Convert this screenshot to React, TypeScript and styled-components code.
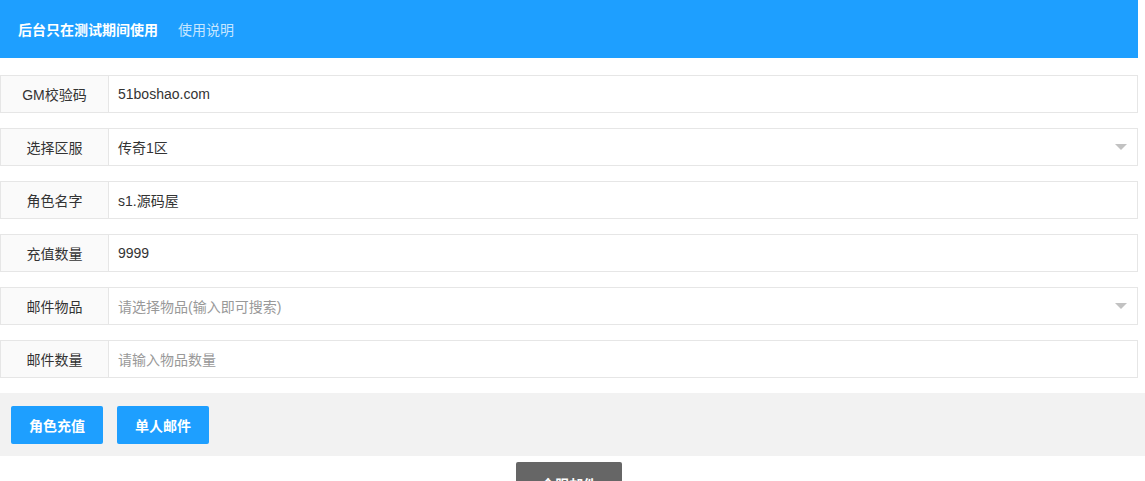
import { FC } from 'react';
import styled, { createGlobalStyle } from 'styled-components';

const GlobalStyle = createGlobalStyle`
  html, body {
    margin: 0;
    padding: 0;
    background: #fff;
    overflow: hidden;
  }
  body {
    font-family: 'Liberation Sans', 'Noto Sans CJK SC', sans-serif;
    font-size: 14px;
    color: #333;
  }
  * {
    box-sizing: border-box;
  }
`;

const Page = styled.div`
  width: 1138px;
`;

const Header = styled.div`
  height: 58px;
  background: #1e9fff;
  display: flex;
  align-items: center;
  padding-left: 18px;
  gap: 20px;
`;

const HeaderTitle = styled.span`
  color: #fff;
  font-weight: 700;
  font-size: 14px;
`;

const HeaderLink = styled.span`
  color: rgba(255, 255, 255, 0.75);
  font-size: 14px;
`;

const Form = styled.div`
  padding-top: 17px;
  display: flex;
  flex-direction: column;
  gap: 15px;
`;

const Row = styled.div`
  display: flex;
  height: 38px;
`;

const Label = styled.div`
  width: 108px;
  flex-shrink: 0;
  display: flex;
  align-items: center;
  justify-content: center;
  background: #fafafa;
  border: 1px solid #e6e6e6;
  border-right: none;
  color: #333;
`;

const Field = styled.div<{ $placeholder?: boolean }>`
  flex: 1;
  position: relative;
  display: flex;
  align-items: center;
  padding-left: 9px;
  border: 1px solid #e6e6e6;
  color: ${p => (p.$placeholder ? '#999' : '#333')};
`;

const Arrow = styled.i`
  position: absolute;
  right: 10px;
  top: 50%;
  margin-top: -3px;
  width: 0;
  height: 0;
  border-style: solid;
  border-width: 6px 6px 0;
  border-color: #c2c2c2 transparent transparent;
`;

const ButtonBar = styled.div`
  margin-top: 15px;
  height: 63px;
  background: #f2f2f2;
  display: flex;
  align-items: center;
  padding-left: 11px;
  gap: 14px;
  width: 1145px;
`;

const Button = styled.button`
  width: 92px;
  height: 38px;
  border: none;
  border-radius: 2px;
  background: #1e9fff;
  color: #fff;
  font-family: inherit;
  font-size: 14px;
  font-weight: 700;
  padding: 0;
`;

const Footer = styled.div`
  display: flex;
  justify-content: center;
  padding-top: 6px;
`;

const DarkButton = styled.button`
  width: 106px;
  height: 44px;
  border: none;
  border-radius: 2px;
  background: #666;
  color: #fff;
  font-family: inherit;
  font-size: 14px;
  font-weight: 700;
  padding: 0;
`;

interface IFormRow {
  label: string;
  value: string;
  placeholder?: boolean;
  select?: boolean;
}

const rows: IFormRow[] = [
  { label: 'GM校验码', value: '51boshao.com' },
  { label: '选择区服', value: '传奇1区', select: true },
  { label: '角色名字', value: 's1.源码屋' },
  { label: '充值数量', value: '9999' },
  { label: '邮件物品', value: '请选择物品(输入即可搜索)', placeholder: true, select: true },
  { label: '邮件数量', value: '请输入物品数量', placeholder: true }
];

const App: FC = () => (
  <Page>
    <GlobalStyle />
    <Header>
      <HeaderTitle>后台只在测试期间使用</HeaderTitle>
      <HeaderLink>使用说明</HeaderLink>
    </Header>
    <Form>
      {rows.map(r => (
        <Row key={r.label}>
          <Label>{r.label}</Label>
          <Field $placeholder={r.placeholder}>
            {r.value}
            {r.select && <Arrow />}
          </Field>
        </Row>
      ))}
    </Form>
    <ButtonBar>
      <Button>角色充值</Button>
      <Button>单人邮件</Button>
    </ButtonBar>
    <Footer>
      <DarkButton>全服邮件</DarkButton>
    </Footer>
  </Page>
);

export default App;
